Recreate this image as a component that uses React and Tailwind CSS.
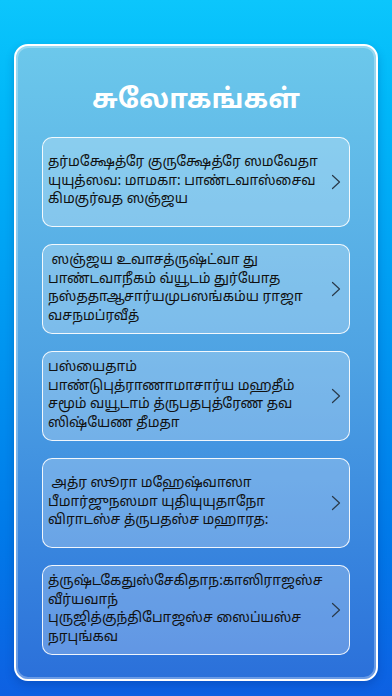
import React from "react";

const items = [
  ["தர்மக்ஷேத்ரே குருக்ஷேத்ரே ஸமவேதா", "யுயுத்ஸவ: மாமகா: பாண்டவாஸ்சைவ", "கிமகுர்வத ஸஞ்ஜய"],
  ["\u00a0ஸஞ்ஜய உவாசத்ருஷ்ட்வா து", "பாண்டவாநீகம் வ்யூடம் துர்யோத", "நஸ்ததாஆசார்யமுபஸங்கம்ய ராஜா", "வசநமப்ரவீத்"],
  ["பஸ்யைதாம்", "பாண்டுபுத்ராணாமாசார்ய மஹதீம்", "சமூம் வயூடாம் த்ருபதபுத்ரேண தவ", "ஸிஷ்யேண தீமதா"],
  ["\u00a0அத்ர ஸூரா மஹேஷ்வாஸா", "பீமார்ஜுநஸமா யுதியுயுதாநோ", "விராடஸ்ச த்ருபதஸ்ச மஹாரத:"],
  ["த்ருஷ்டகேதுஸ்சேகிதாந:காஸிராஜஸ்ச", "வீர்யவாந்", "புருஜித்குந்திபோஜஸ்ச ஸைப்யஸ்ச", "நரபுங்கவ"],
];

function Chevron() {
  return (
    <svg width="10" height="16" viewBox="0 0 10 16" className="shrink-0">
      <polyline points="1.5,1.5 8.5,8 1.5,14.5" fill="none" stroke="#2a3a4a" strokeWidth="1.2" strokeLinecap="round" strokeLinejoin="round" />
    </svg>
  );
}

export default function App() {
  return (
    <div
      className="w-[392px] h-[696px] bg-gradient-to-b from-[#0cc6fc] to-[#0e60e2] pt-[44px] px-[14px] overflow-hidden"
      style={{ fontFamily: '"Noto Sans Tamil", "Lohit Tamil", "Noto Sans", sans-serif' }}
    >
      <div className="h-[637px] rounded-[14px] border-2 border-white bg-gradient-to-b from-[#6cc8eb] via-[#4ea2e3] to-[#2b70da] shadow-[inset_0_0_0_2px_rgba(255,255,255,0.3),0_4px_8px_rgba(0,40,120,0.25)] px-[26px] pb-[24px] flex flex-col">
        <div className="h-[92px] flex items-center justify-center pt-[20px]">
          <h1 className="text-white font-bold text-[27px] leading-none">சுலோகங்கள்</h1>
        </div>
        <div className="flex flex-col gap-[17px]">
          {items.map((lines, i) => (
            <div
              key={i}
              className="h-[90px] rounded-[10px] border-[1.5px] border-white/90 bg-white/25 flex items-center pl-[5px] pr-[8px]"
            >
              <div className="flex-1 text-[13.7px] leading-[18.5px] text-[#111]">
                {lines.map((l, j) => (
                  <div key={j} className="whitespace-nowrap">{l}</div>
                ))}
              </div>
              <Chevron />
            </div>
          ))}
        </div>
      </div>
    </div>
  );
}
